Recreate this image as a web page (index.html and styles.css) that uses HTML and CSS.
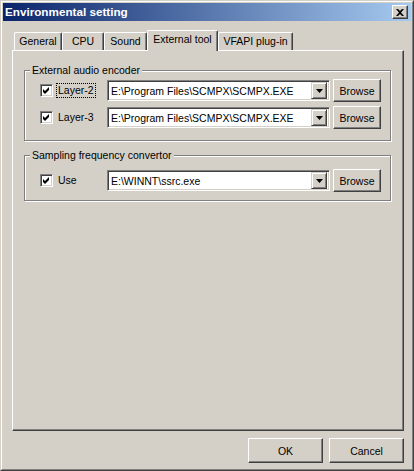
FILE: index.html
```html
<!DOCTYPE html>
<html>
<head>
<meta charset="utf-8">
<title>Environmental setting</title>
<link rel="stylesheet" href="styles.css">
</head>
<body>
<div class="window">
  <div class="frame">
    <div class="titlebar">
      <span class="title">Environmental setting</span>
      <span class="close-btn">
        <svg width="8" height="7" viewBox="0 0 8 7"><path d="M0 0h2l2 2 2-2h2L5 3.5 8 7H6L4 5 2 7H0l3-3.5z" fill="#000"/></svg>
      </span>
    </div>
    <div class="client">
      <div class="tabs">
        <div class="tab tab-general">General</div>
        <div class="tab tab-cpu">CPU</div>
        <div class="tab tab-sound">Sound</div>
        <div class="tab tab-ext active">External tool</div>
        <div class="tab tab-vfapi">VFAPI plug-in</div>
      </div>
      <div class="panel">
        <fieldset class="group group-encoder">
          <legend>External audio encoder</legend>
          <div class="row">
            <div class="check">
              <span class="box"><svg width="9" height="9" viewBox="0 0 9 9"><path d="M1 3l2 2 4-4v3l-4 4-2-2z" fill="#000"/></svg></span>
              <span class="lbl focus">Layer-2</span>
            </div>
            <div class="combo"><span class="val">E:\Program Files\SCMPX\SCMPX.EXE</span><span class="drop"><svg width="7" height="4" viewBox="0 0 7 4"><path d="M0 0h7L3.5 4z" fill="#000"/></svg></span></div>
            <div class="btn browse">Browse</div>
          </div>
          <div class="row">
            <div class="check">
              <span class="box"><svg width="9" height="9" viewBox="0 0 9 9"><path d="M1 3l2 2 4-4v3l-4 4-2-2z" fill="#000"/></svg></span>
              <span class="lbl">Layer-3</span>
            </div>
            <div class="combo"><span class="val">E:\Program Files\SCMPX\SCMPX.EXE</span><span class="drop"><svg width="7" height="4" viewBox="0 0 7 4"><path d="M0 0h7L3.5 4z" fill="#000"/></svg></span></div>
            <div class="btn browse">Browse</div>
          </div>
        </fieldset>
        <fieldset class="group group-sampling">
          <legend>Sampling frequency convertor</legend>
          <div class="row">
            <div class="check">
              <span class="box"><svg width="9" height="9" viewBox="0 0 9 9"><path d="M1 3l2 2 4-4v3l-4 4-2-2z" fill="#000"/></svg></span>
              <span class="lbl">Use</span>
            </div>
            <div class="combo"><span class="val">E:\WINNT\ssrc.exe</span><span class="drop"><svg width="7" height="4" viewBox="0 0 7 4"><path d="M0 0h7L3.5 4z" fill="#000"/></svg></span></div>
            <div class="btn browse">Browse</div>
          </div>
        </fieldset>
      </div>
      <div class="footer">
        <div class="btn dlg">OK</div>
        <div class="btn dlg">Cancel</div>
      </div>
    </div>
  </div>
</div>
</body>
</html>
```
FILE: styles.css
```css
* { box-sizing: border-box; }
html, body { margin: 0; padding: 0; background: #d4d0c8; }
body {
  font-family: "Liberation Sans", Arial, sans-serif;
  font-size: 10.5px;
  color: #000;
}
.window {
  width: 414px;
  height: 471px;
  border: 1px solid;
  border-color: #d4d0c8 #404040 #404040 #d4d0c8;
  background: #d4d0c8;
}
.frame {
  height: 100%;
  border: 1px solid;
  border-color: #fff #808080 #808080 #fff;
  padding: 1px;
  display: flex;
  flex-direction: column;
}
.titlebar {
  height: 18px;
  flex: none;
  display: flex;
  align-items: center;
  justify-content: space-between;
  padding: 0 3px 0 2px;
  background: linear-gradient(to right, #0a246a, #a6caf0);
}
.title {
  color: #fff;
  font-weight: bold;
  font-size: 11.7px;
  line-height: 14px;
}
.close-btn {
  width: 16px;
  height: 14px;
  display: flex;
  align-items: center;
  justify-content: center;
  background: #d4d0c8;
  border: 1px solid;
  border-color: #fff #404040 #404040 #fff;
  box-shadow: inset -1px -1px 0 #808080;
}
.client {
  flex: 1;
  display: flex;
  flex-direction: column;
  padding: 9px 7px 5px 9px;
}
.tabs {
  height: 20px;
  flex: none;
  display: flex;
  align-items: flex-end;
  padding-left: 2px;
}
.tab {
  height: 18px;
  line-height: 16px;
  text-align: center;
  border-top: 1px solid #fff;
  border-left: 1px solid #fff;
  border-right: 1px solid #404040;
  box-shadow: inset -1px 0 0 #808080;
  border-radius: 2px 2px 0 0;
  background: #d4d0c8;
  white-space: nowrap;
}
.tab-general { width: 48px; }
.tab-cpu { width: 42px; }
.tab-sound { width: 43px; }
.tab-ext { width: 71px; }
.tab-vfapi { width: 75px; }
.tab.active {
  height: 21px;
  line-height: 17px;
  margin-bottom: -1px;
  position: relative;
  z-index: 1;
}
.panel {
  flex: 1;
  border: 1px solid;
  border-color: #fff #404040 #404040 #fff;
  box-shadow: inset -1px -1px 0 #808080;
  padding: 0 12px 0 11px;
}
.group {
  margin: 0;
  border: 1px solid #808080;
  box-shadow: inset 1px 1px 0 #fff, 1px 1px 0 #fff;
  padding: 0 0 0 15px;
  min-width: 0;
}
.group legend {
  margin-left: -10px;
  padding: 0 2px;
  line-height: 13px;
  background: #d4d0c8;
}
.group-encoder {
  margin-top: 13px;
  padding-top: 2px;
  padding-bottom: 11px;
}
.group-sampling {
  margin-top: 8px;
  padding-top: 7px;
  padding-bottom: 8px;
}
.row {
  height: 23px;
  display: flex;
  align-items: center;
}
.row + .row { margin-top: 4px; }
.check {
  width: 67px;
  flex: none;
  display: flex;
  align-items: center;
}
.box {
  width: 13px;
  height: 13px;
  flex: none;
  background: #fff;
  border: 1px solid;
  border-color: #808080 #fff #fff #808080;
  box-shadow: inset 1px 1px 0 #404040, inset -1px -1px 0 #d4d0c8;
  display: flex;
  align-items: center;
  justify-content: center;
}
.lbl {
  margin-left: 3px;
  padding: 0 1px;
  line-height: 13px;
  border: 1px solid transparent;
}
.lbl.focus { border: 1px dotted #000; }
.combo {
  width: 223px;
  height: 21px;
  flex: none;
  display: flex;
  align-items: center;
  background: #fff;
  border: 1px solid;
  border-color: #808080 #fff #fff #808080;
  box-shadow: inset 1px 1px 0 #404040, inset -1px -1px 0 #d4d0c8;
  padding: 2px 2px 2px 3px;
}
.val {
  flex: 1;
  white-space: nowrap;
  overflow: hidden;
}
.drop {
  width: 16px;
  height: 17px;
  flex: none;
  display: flex;
  align-items: center;
  justify-content: center;
  background: #d4d0c8;
  border: 1px solid;
  border-color: #d4d0c8 #404040 #404040 #d4d0c8;
  box-shadow: inset 1px 1px 0 #fff, inset -1px -1px 0 #808080;
}
.btn {
  display: flex;
  align-items: center;
  justify-content: center;
  background: #d4d0c8;
  border: 1px solid;
  border-color: #fff #404040 #404040 #fff;
  box-shadow: inset -1px -1px 0 #808080;
}
.browse {
  width: 48px;
  height: 23px;
  margin-left: 3px;
  flex: none;
}
.footer {
  flex: none;
  display: flex;
  justify-content: flex-end;
  gap: 6px;
  margin-top: 7px;
}
.dlg {
  width: 75px;
  height: 25px;
}
```
